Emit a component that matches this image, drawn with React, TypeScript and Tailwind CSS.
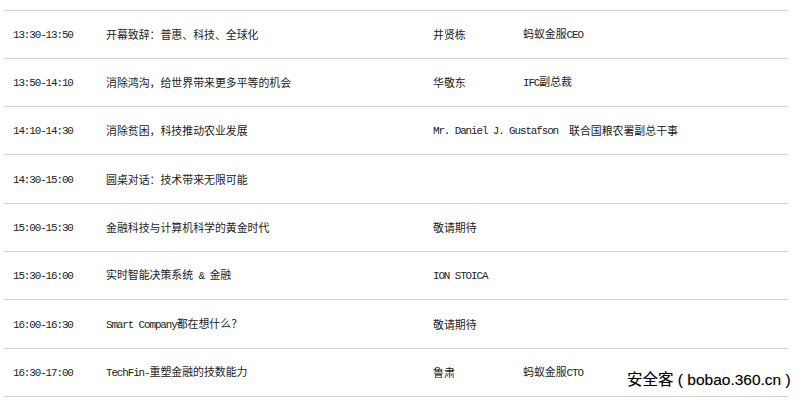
import { FC } from "react";

type Row = { time: string; topic: string; speaker?: string; role?: string };

const rows: Row[] = [
  { time: "13:30-13:50", topic: "开幕致辞：普惠、科技、全球化", speaker: "井贤栋", role: "蚂蚁金服CEO" },
  { time: "13:50-14:10", topic: "消除鸿沟，给世界带来更多平等的机会", speaker: "华敬东", role: "IFC副总裁" },
  { time: "14:10-14:30", topic: "消除贫困，科技推动农业发展", speaker: "Mr. Daniel J. Gustafson", role: "联合国粮农署副总干事" },
  { time: "14:30-15:00", topic: "圆桌对话：技术带来无限可能" },
  { time: "15:00-15:30", topic: "金融科技与计算机科学的黄金时代", speaker: "敬请期待" },
  { time: "15:30-16:00", topic: "实时智能决策系统 & 金融", speaker: "ION STOICA" },
  { time: "16:00-16:30", topic: "Smart Company都在想什么？", speaker: "敬请期待" },
  { time: "16:30-17:00", topic: "TechFin-重塑金融的技数能力", speaker: "鲁肃", role: "蚂蚁金服CTO" },
];

// 半角文字だけ等幅フォントで詰めて描く
const Mixed: FC<{ text?: string }> = ({ text }) => {
  if (!text) return null;
  const parts = text.split(/([\x20-\x7e]+)/).filter((p) => p !== "");
  return (
    <>
      {parts.map((p, i) =>
        /^[\x20-\x7e]+$/.test(p) ? (
          <span key={i} className="font-['Liberation_Mono',monospace] tracking-[-1.1px]">
            {p}
          </span>
        ) : (
          <span key={i}>{p}</span>
        )
      )}
    </>
  );
};

const App: FC = () => {
  return (
    <div className="relative w-[800px] h-[402px] overflow-hidden bg-white font-['Noto_Sans_CJK_SC',sans-serif] text-[10.9px] text-[#222]">
      <div className="pt-[10px] pl-1 w-[788px]">
        {rows.map((r, i) => (
          <div
            key={r.time}
            className={`flex items-center border-t border-[#d0d0d0] ${
              i === 3 || i === 6 ? "h-[49px]" : "h-[48px]"
            }`}
          >
            <div className="w-[102px] pl-[9px]">
              <Mixed text={r.time} />
            </div>
            <div className="w-[327px]">
              <Mixed text={r.topic} />
            </div>
            <div className={r.speaker && r.speaker.length > 12 ? "pr-[11px]" : "w-[90px]"}>
              <Mixed text={r.speaker} />
            </div>
            <div>
              <Mixed text={r.role} />
            </div>
          </div>
        ))}
        <div className="border-t border-[#d0d0d0]" />
      </div>
      {/* 右下の透かし */}
      <div className="absolute left-[627px] top-[368px] whitespace-nowrap text-[15.5px] leading-[24px] text-black font-['Liberation_Sans','Noto_Sans_CJK_SC',sans-serif] [text-shadow:0_0_2px_#fff,0_0_1px_#999]">
        安全客 ( bobao.360.cn )
      </div>
    </div>
  );
};

export default App;
